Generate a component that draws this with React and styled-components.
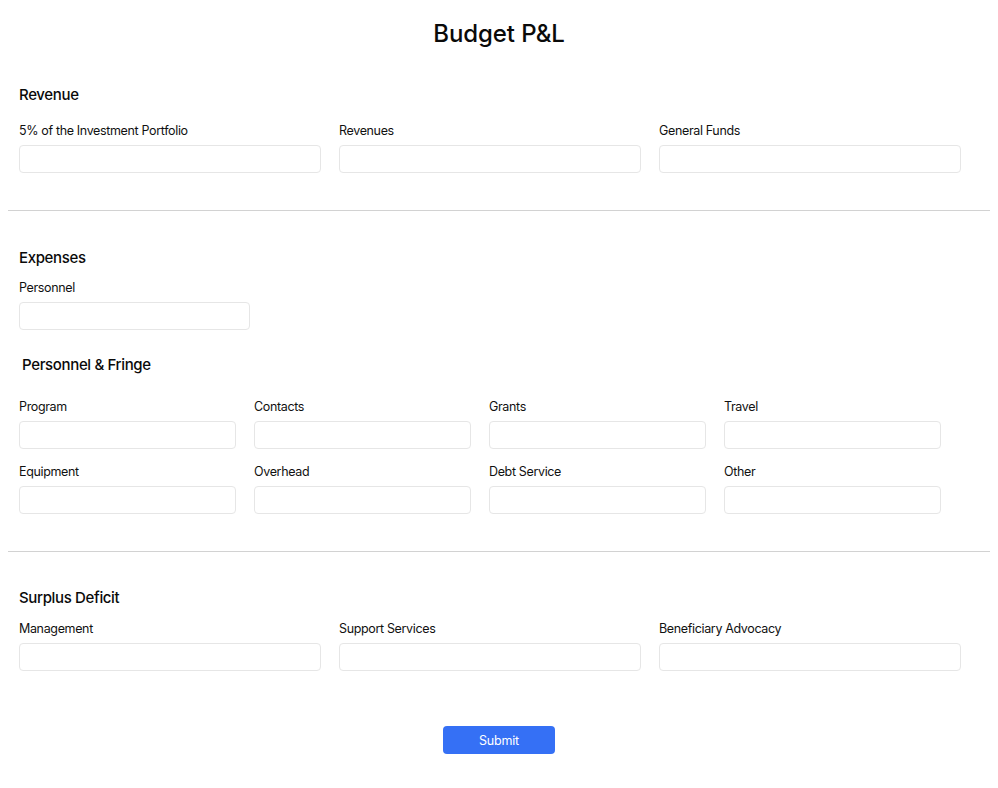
import React from "react";
import styled, { createGlobalStyle } from "styled-components";

const Global = createGlobalStyle`
  body {
    margin: 8px;
    background: #ffffff;
    font-family: Inter, "Liberation Sans", Arial, sans-serif;
    color: #111;
  }
  * { box-sizing: border-box; }
`;

const Page = styled.form`
  display: flex;
  flex-direction: column;
`;

const Title = styled.h1`
  margin: 12px 0 0;
  font-size: 24px;
  line-height: 28px;
  font-weight: 500;
  letter-spacing: -0.1px;
  text-align: center;
  color: #0a0a0a;
`;

const Section = styled.section`
  padding: ${(p) => p.$top}px 11px 0;
  display: flex;
  flex-direction: column;
`;

const Heading = styled.h2`
  margin: 1px 0 ${(p) => p.$after - 1}px ${(p) => p.$indent || 0}px;
  font-size: 15px;
  line-height: 20px;
  font-weight: 500;
  letter-spacing: -0.35px;
  color: #0a0a0a;
`;

const SubHeading = styled(Heading)`
  margin-top: 25px;
`;

const Grid = styled.div`
  display: grid;
  grid-template-columns: repeat(${(p) => p.$cols}, ${(p) => p.$w}px);
  column-gap: 18px;
  row-gap: ${(p) => p.$rowGap || 0}px;
`;

const Field = styled.label`
  display: flex;
  flex-direction: column;
  gap: 7px;
  width: ${(p) => (p.$w ? `${p.$w}px` : "auto")};
`;

const LabelText = styled.span`
  font-size: 12.5px;
  line-height: 16px;
  letter-spacing: -0.35px;
  padding-top: 1px;
  margin-bottom: -1px;
  color: #111;
`;

const Input = styled.input`
  height: 28px;
  border: 1px solid #e6e6e6;
  border-radius: 4px;
  background: #fff;
  padding: 0 8px;
  font: inherit;
  outline: none;
`;

const Divider = styled.hr`
  margin: 37px 0 0 -1px;
  border: none;
  border-top: 1px solid #d2d2d2;
  width: 983px;
`;

const Footer = styled.div`
  display: flex;
  justify-content: center;
  margin-top: 55px;
`;

const Button = styled.button`
  width: 112px;
  height: 28px;
  border: none;
  border-radius: 4px;
  background: #3570f5;
  color: #fff;
  font-family: inherit;
  font-size: 12.5px;
  letter-spacing: -0.2px;
`;

const F = ({ label, w }) => (
  <Field $w={w}>
    <LabelText>{label}</LabelText>
    <Input type="text" />
  </Field>
);

export default function App() {
  return (
    <>
      <Global />
      <Page onSubmit={(e) => e.preventDefault()}>
        <Title>Budget P&amp;L</Title>
        <Section $top={36}>
          <Heading $after={18}>Revenue</Heading>
          <Grid $cols={3} $w={302}>
            <F label="5% of the Investment Portfolio" />
            <F label="Revenues" />
            <F label="General Funds" />
          </Grid>
        </Section>
        <Divider />
        <Section $top={36}>
          <Heading $after={12}>Expenses</Heading>
          <F label="Personnel" w={231} />
          <SubHeading $after={24} $indent={3}>
            Personnel &amp; Fringe
          </SubHeading>
          <Grid $cols={4} $w={217} $rowGap={14}>
            <F label="Program" />
            <F label="Contacts" />
            <F label="Grants" />
            <F label="Travel" />
            <F label="Equipment" />
            <F label="Overhead" />
            <F label="Debt Service" />
            <F label="Other" />
          </Grid>
        </Section>
        <Divider />
        <Section $top={35}>
          <Heading $after={13}>Surplus Deficit</Heading>
          <Grid $cols={3} $w={302}>
            <F label="Management" />
            <F label="Support Services" />
            <F label="Beneficiary Advocacy" />
          </Grid>
        </Section>
        <Footer>
          <Button type="submit">Submit</Button>
        </Footer>
      </Page>
    </>
  );
}
